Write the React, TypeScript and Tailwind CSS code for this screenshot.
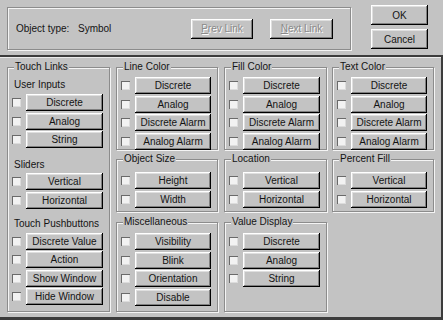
import type { ReactNode } from 'react'

const raised =
  'shadow-[inset_-1px_-1px_0_#000,inset_1px_1px_0_#fff,inset_-2px_-2px_0_#808080,inset_2px_2px_0_#dfdfdf]'

function Button({ children, className = '' }: { children: ReactNode; className?: string }) {
  return (
    <div className={`flex items-center justify-center bg-[#c3c3c3] ${raised} ${className}`}>
      {children}
    </div>
  )
}

function Check() {
  return (
    <span className="block w-[9px] h-[9px] shrink-0 bg-[#f2f2f2] shadow-[inset_1px_1px_0_#6a6a6a,inset_-1px_-1px_0_#dcdcdc]" />
  )
}

function Rows({ items }: { items: string[] }) {
  return (
    <div className="flex flex-col gap-[1.5px]">
      {items.map((label) => (
        <div key={label} className="flex items-center pl-[4px] pr-[6px]">
          <Check />
          <Button className="ml-[5px] flex-1 h-[17px]">{label}</Button>
        </div>
      ))}
    </div>
  )
}

function GroupBox({
  title,
  className = '',
  children,
}: {
  title: string
  className?: string
  children: ReactNode
}) {
  return (
    <div
      className={`relative border border-[#8c8c8c] shadow-[inset_1px_1px_0_#f4f4f4,1px_1px_0_#f4f4f4] ${className}`}
    >
      <span className="absolute -top-[7px] left-[6px] px-[1px] leading-[12px] bg-[#c3c3c3]">
        {title}
      </span>
      {children}
    </div>
  )
}

function SubLabel({ children, className = '' }: { children: ReactNode; className?: string }) {
  return <div className={`pl-[6px] leading-[12px] ${className}`}>{children}</div>
}

function Disabled({ first, rest }: { first: string; rest: string }) {
  return (
    <span className="text-[#8a8a8a] [text-shadow:1px_1px_0_#fff]">
      <span className="underline">{first}</span>
      {rest}
    </span>
  )
}

export default function App() {
  return (
    <div
      className="w-[443px] h-[320px] overflow-hidden bg-[#c3c3c3] text-[10px] text-[#141414] select-none"
      style={{ fontFamily: '"Liberation Sans", Arial, sans-serif' }}
    >
      {/* header */}
      <div className="h-[55px] flex pt-[5px] pl-[7px]">
        <GroupBox title="" className="mt-[2px] w-[344px] h-[43px] flex items-center">
          <span className="pl-[8px] w-[70px]">Object type:</span>
          <span className="w-[113px]">Symbol</span>
          <Button className="w-[62px] h-[20px]">
            <Disabled first="P" rest="rev Link" />
          </Button>
          <Button className="ml-[17px] w-[63px] h-[20px]">
            <Disabled first="N" rest="ext Link" />
          </Button>
        </GroupBox>
        <div className="ml-[20px] flex flex-col gap-[4px]">
          <Button className="w-[57px] h-[20px]">OK</Button>
          <Button className="w-[57px] h-[20px]">Cancel</Button>
        </div>
      </div>

      {/* link panel */}
      <div className="h-[265px] border-t-2 border-r-2 border-b-[3px] border-[#3c3c3c] shadow-[inset_0_1px_0_#ececec] pt-[10px] pl-[7px] flex">
        <GroupBox title="Touch Links" className="w-[103px] h-[245px]">
          <SubLabel className="mt-[11px]">User Inputs</SubLabel>
          <div className="mt-[3px]">
            <Rows items={['Discrete', 'Analog', 'String']} />
          </div>
          <SubLabel className="mt-[11px]">Sliders</SubLabel>
          <div className="mt-[2px]">
            <Rows items={['Vertical', 'Horizontal']} />
          </div>
          <SubLabel className="mt-[9px]">Touch Pushbuttons</SubLabel>
          <div className="mt-[3px]">
            <Rows items={['Discrete Value', 'Action', 'Show Window', 'Hide Window']} />
          </div>
        </GroupBox>

        <div className="ml-[6px] w-[102px] flex flex-col">
          <GroupBox title="Line Color" className="h-[83px] pt-[9px]">
            <Rows items={['Discrete', 'Analog', 'Discrete Alarm', 'Analog Alarm']} />
          </GroupBox>
          <GroupBox title="Object Size" className="mt-[9px] h-[53px] pt-[12px]">
            <Rows items={['Height', 'Width']} />
          </GroupBox>
          <GroupBox title="Miscellaneous" className="mt-[10px] h-[90px] pt-[10px]">
            <Rows items={['Visibility', 'Blink', 'Orientation', 'Disable']} />
          </GroupBox>
        </div>

        <div className="ml-[6px] w-[103px] flex flex-col">
          <GroupBox title="Fill Color" className="h-[83px] pt-[9px]">
            <Rows items={['Discrete', 'Analog', 'Discrete Alarm', 'Analog Alarm']} />
          </GroupBox>
          <GroupBox title="Location" className="mt-[9px] h-[53px] pt-[12px]">
            <Rows items={['Vertical', 'Horizontal']} />
          </GroupBox>
          <GroupBox title="Value Display" className="mt-[10px] h-[90px] pt-[10px]">
            <Rows items={['Discrete', 'Analog', 'String']} />
          </GroupBox>
        </div>

        <div className="ml-[5px] w-[102px] flex flex-col">
          <GroupBox title="Text Color" className="h-[83px] pt-[9px]">
            <Rows items={['Discrete', 'Analog', 'Discrete Alarm', 'Analog Alarm']} />
          </GroupBox>
          <GroupBox title="Percent Fill" className="mt-[9px] h-[53px] pt-[12px]">
            <Rows items={['Vertical', 'Horizontal']} />
          </GroupBox>
        </div>
      </div>
    </div>
  )
}
